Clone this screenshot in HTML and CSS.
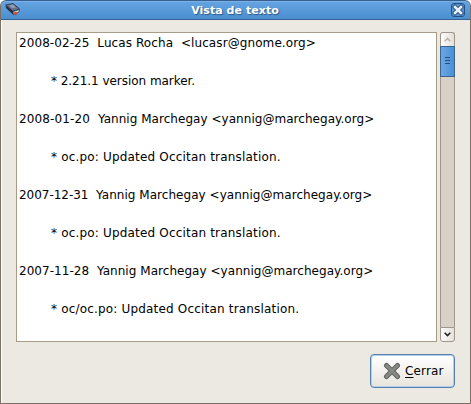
FILE: index.html
```html
<!DOCTYPE html>
<html lang="es">
<head>
<meta charset="utf-8">
<title>Vista de texto</title>
<link rel="stylesheet" href="styles.css">
</head>
<body>
<div class="window">
  <header class="titlebar">
    <svg class="app-icon" width="16" height="14" viewBox="0 0 16 14">
      <path d="M.7 2 L8 .6 14.6 6 7.6 8.2Z" fill="#65708c" stroke="#343d58"/>
      <path d="M.5 2.5 L1 5 8 11.5 8 8.3Z" fill="#252938"/>
      <path d="M8 8.6 L14.5 6.5 14 9 8.5 11.8Z" fill="#d5d0cc" stroke="#343442" stroke-width=".7"/>
      <path d="M4 2.5 L8 1.6 11 4.3 7.2 5.3Z" fill="#929cb2"/>
      <path d="M9 9.5 L11.5 8.7 12 10.5 11 12.7 9.3 11.5Z" fill="#bd4937"/>
    </svg>
    <h1 class="title">Vista de texto</h1>
    <button class="close" aria-label="Cerrar">
      <svg width="14" height="14" viewBox="0 0 14 14">
        <rect x=".5" y=".5" width="13" height="13" rx="2.5" fill="#5593d3" stroke="#254f7e"/>
        <path d="M4 4 L10 10 M10 4 L4 10" stroke="#294f7b" stroke-width="4.2" stroke-linecap="square"/>
        <path d="M4 4 L10 10 M10 4 L4 10" stroke="#e9f2fa" stroke-width="2.5" stroke-linecap="square"/>
      </svg>
    </button>
  </header>
  <main class="content">
    <div class="viewer">
      <div class="text">
        <p class="wide"><span class="date-a">2008-02-25  </span>Lucas Rocha  &lt;lucasr@gnome.org&gt;</p>
        <p class="entry version">* 2.21.1 version marker.</p>
        <p><span class="date-b">2008-01-20  </span>Yannig Marchegay &lt;yannig@marchegay.org&gt;</p>
        <p class="entry">* oc.po: Updated Occitan translation.</p>
        <p><span class="date-c">2007-12-31  </span>Yannig Marchegay &lt;yannig@marchegay.org&gt;</p>
        <p class="entry">* oc.po: Updated Occitan translation.</p>
        <p><span class="date-d">2007-11-28  </span>Yannig Marchegay &lt;yannig@marchegay.org&gt;</p>
        <p class="entry">* oc/oc.po: Updated Occitan translation.</p>
      </div>
      <div class="scrollbar">
        <div class="step up"><svg width="7" height="5" viewBox="0 0 7 5"><path d="M.7 4.2 L3.5 1.4 6.3 4.2" fill="none" stroke="#b9b2a4" stroke-width="1.5"/></svg></div>
        <div class="thumb"><i></i><i></i><i></i></div>
        <div class="trough"></div>
        <div class="step down"><svg width="7" height="5" viewBox="0 0 7 5"><path d="M.7 .8 L3.5 3.6 6.3 .8" fill="none" stroke="#222" stroke-width="1.6"/></svg></div>
      </div>
    </div>
    <button class="button">
      <svg width="18" height="18" viewBox="0 0 18 18">
        <path d="M3.5 3.5 L14.5 14.5 M14.5 3.5 L3.5 14.5" stroke="#5f615d" stroke-width="5" stroke-linecap="round"/>
        <path d="M3.5 3.5 L14.5 14.5 M14.5 3.5 L3.5 14.5" stroke="#888a85" stroke-width="3" stroke-linecap="round"/>
      </svg>
      <span><u>C</u>errar</span>
    </button>
  </main>
</div>
</body>
</html>
```
FILE: styles.css
```css
* { box-sizing: border-box; }
body {
  margin: 0;
  background: #fff;
  font: 12px/19px "DejaVu Sans", sans-serif;
  color: #000;
}
p, h1 { margin: 0; }
svg { display: block; }
.window {
  width: 471px;
  height: 404px;
  display: flex;
  flex-direction: column;
  background: #ece9e2;
  border: 1px solid #7b6f66;
  border-top: 0;
  border-radius: 6px 6px 0 0;
  overflow: hidden;
}
.titlebar {
  height: 20px;
  flex: none;
  display: flex;
  align-items: center;
  margin: 0 -1px;
  padding: 0 5px 0 4px;
  border: 1px solid #36608f;
  border-radius: 6px 6px 0 0;
  background: linear-gradient(#66a4e2, #4a8fd0);
  box-shadow: inset 0 1px #7ab0e6;
}
.title {
  flex: 1;
  padding-right: 2px;
  text-align: center;
  color: #fff;
  font-size: 11px;
  font-weight: bold;
  letter-spacing: .05px;
  text-shadow: 1px 1px 1px #2c5788;
}
.close { border: 0; padding: 0; background: none; }
.content {
  flex: 1;
  display: flex;
  flex-direction: column;
  padding: 12px 15px 15px 14px;
  border-left: 1px solid #fff;
  border-bottom: 1px solid #cfc7bb;
}
.viewer { display: flex; gap: 3px; height: 310px; }
.text {
  width: 421px;
  padding: 1px 2px;
  border: 1px solid #a79c88;
  background: #fff;
  overflow: hidden;
}
.text p { height: 38px; white-space: pre; letter-spacing: .04px; }
.text .wide { letter-spacing: .09px; }
.text .entry { padding-left: 32px; letter-spacing: .18px; }
.text .version { letter-spacing: -.04px; }
.date-a { letter-spacing: .08px; }
.date-b { letter-spacing: .13px; }
.date-c { letter-spacing: -.03px; }
.date-d { letter-spacing: .05px; }
.scrollbar { width: 15px; display: flex; flex-direction: column; }
.step {
  height: 15px;
  display: flex;
  align-items: center;
  justify-content: center;
  border: 1px solid #a0968a;
  background: linear-gradient(90deg, #fdfdfc, #e4e0d9);
}
.up { border-bottom: 0; height: 14px; border-radius: 3px 3px 0 0; }
.down { border-radius: 0 0 3px 3px; }
.thumb {
  height: 31px;
  display: flex;
  flex-direction: column;
  align-items: center;
  justify-content: center;
  gap: 2px;
  padding-bottom: 3px;
  border: 1px solid #38648f;
  background: linear-gradient(90deg, #6aa8e5, #4b8fd1);
}
.thumb i { width: 5px; height: 1px; background: #244f80; }
.trough { flex: 1; background: #d8d1c5; border: solid #a0968a; border-width: 0 1px; }
.button {
  align-self: flex-end;
  display: flex;
  align-items: center;
  gap: 4px;
  width: 85px;
  height: 34px;
  margin-top: 12px;
  padding: 0 0 0 12px;
  border: 1px solid #5480ae;
  border-radius: 4px;
  box-shadow: inset 0 0 0 1px #b5cfe9;
  background: linear-gradient(#fff, #e8e4dd);
  font: inherit;
  letter-spacing: .15px;
  color: #000;
}
u { text-underline-offset: 2px; }
```
